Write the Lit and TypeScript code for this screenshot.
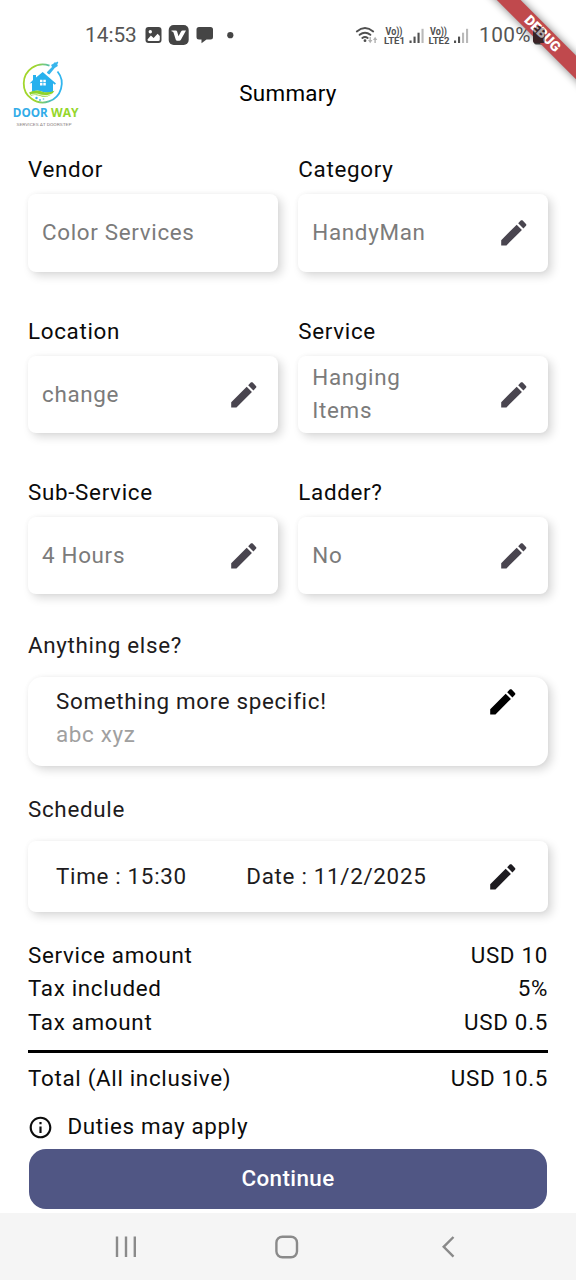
import { LitElement, html, css, svg } from "lit";
import { customElement, property } from "lit/decorators.js";

@customElement("edit-icon")
class EditIcon extends LitElement {
  static styles = css`
    :host { display: block; width: 33.6px; height: 33.6px; flex: none; }
    svg { display: block; width: 100%; height: 100%; fill: currentColor; }
  `;
  render() {
    return html`<svg viewBox="0 0 24 24"><path d="M3 17.25V21h3.75L17.81 9.94l-3.75-3.75L3 17.25zM20.71 7.04c.39-.39.39-1.02 0-1.41l-2.34-2.34c-.39-.39-1.02-.39-1.41 0l-1.83 1.83 3.75 3.75 1.83-1.83z"/></svg>`;
  }
}

@customElement("summary-field")
class SummaryField extends LitElement {
  @property() label = "";
  @property() value = "";
  @property({ type: Boolean }) editable = false;
  static styles = css`
    :host { display: flex; flex-direction: column; gap: 7.4px; }
    .label { color: #0a0a0a; line-height: 33.6px; }
    .card {
      box-sizing: border-box; height: 77.6px; padding: 0 17px 0 14px; border-radius: 8px; background: #fff;
      display: flex; align-items: center; justify-content: space-between;
      box-shadow: 4px 4px 10px rgba(0, 0, 0, 0.15), 0 0 5px rgba(0, 0, 0, 0.04);
    }
    .value { color: #7b7b7b; width: 126px; }
    .wide { width: auto; }
    edit-icon { color: #49454f; }
  `;
  render() {
    return html`
      <div class="label">${this.label}</div>
      <div class="card">
        <div class="value ${this.editable ? "" : "wide"}">${this.value}</div>
        ${this.editable ? html`<edit-icon></edit-icon>` : ""}
      </div>`;
  }
}

@customElement("status-bar")
class StatusBar extends LitElement {
  static styles = css`
    :host { display: flex; box-sizing: border-box; height: 58px; padding: 13px 30px 0 85px; align-items: center; justify-content: space-between; color: #555; font-size: 20.8px; letter-spacing: 0; }
    .side { display: flex; align-items: center; }
    .icons { display: block; margin-left: 7px; margin-top: -1px; }
    .full { letter-spacing: 0.4px; margin-left: 7px; }
    .battery { display: block; margin-left: 3px; }
    svg text { font-family: Roboto, sans-serif; font-weight: 700; letter-spacing: 0; }
  `;
  private sim(x: number, n: number, strong: number) {
    return svg`
      <text x=${x + 1.5} y="16" font-size="10" textLength="17" lengthAdjust="spacingAndGlyphs">Vo))</text>
      <text x=${x} y="24.6" font-size="9.6" textLength="21" lengthAdjust="spacingAndGlyphs">LTE${n}</text>
      ${[0, 1, 2, 3].map((i) => svg`<rect x=${x + 25.5 + i * 4} y=${21.5 - i * 3.9} width="2.1" height=${2.5 + i * 3.9} opacity=${i < strong ? 1 : 0.4}/>`)}`;
  }
  render() {
    return html`
      <div class="side">
        <span>14:53</span>
        <svg class="icons" width="92" height="24" viewBox="145 23 92 24" fill="#454545">
          <rect x="146.5" y="27" width="16" height="16" rx="3"/>
          <circle cx="151.3" cy="31.8" r="1.7" fill="#fff"/>
          <path d="M148.5 39.5l3.4-4 2.7 2.6 4-4.4 2.2 2.4v3.4q0 1.5-1.5 1.5h-9.3q-1.5 0-1.5-1.5z" fill="#fff"/>
          <rect x="169.7" y="25" width="20" height="20" rx="5"/>
          <path d="M172.500 30.500h4.200q1.200 0 1.500 1.300l1.300 4.500 2.400-4.600q.6-1.200 1.900-1.200h3.200l-5.100 9.200q-.6 1-1.700 1h-2q-1 0-1.400-1l-2.300-7.200q-.3-.9-2-1.200z" fill="#fff"/>
          <path d="M200 27h11.5a2.500 2.500 0 0 1 2.500 2.500v7.500a2.500 2.500 0 0 1-2.500 2.500h-4l-5 3.800v-3.800h-2.500a2.500 2.500 0 0 1-2.500-2.500v-7.500a2.500 2.500 0 0 1 2.500-2.500z"/>
          <circle cx="231.3" cy="35.2" r="3.1"/>
        </svg>
      </div>
      <div class="side">
        <svg width="118" height="34" viewBox="355 18 118 34" fill="#505050">
          <g fill="none" stroke="#505050" stroke-width="1.9" stroke-linecap="round">
            <path d="M357.8 30.4q8.200-6.800 16.400 0M360.600 33.800q5.400-4.300 10.800 0M363.300 37q2.700-2 5.400 0"/>
          </g>
          <circle cx="366" cy="39.7" r="1.4"/>
          <path d="M369 39h1.500v-3h1.400v3h1.500l-2.200 3.200zM374 39h1.400v3h1.400v-3h1.500l-2.200-3.200z" opacity=".45"/>
          <g transform="translate(0 18)">${this.sim(385, 1, 3)}${this.sim(429.5, 2, 2)}</g>
        </svg>
        <span class="full">100%</span>
        <svg class="battery" width="12" height="18" viewBox="0 0 12 18"><path d="M3.5 0h5v2h1.500a2 2 0 0 1 2 2v11.500a2 2 0 0 1-2 2h-8a2 2 0 0 1-2-2v-11.500a2 2 0 0 1 2-2h1.500z" fill="#444"/></svg>
      </div>`;
  }
}

@customElement("door-logo")
class DoorLogo extends LitElement {
  static styles = css`
    :host { display: block; width: 70px; height: 70px; }
    svg { display: block; }
    text { font-family: "Open Sans", sans-serif; letter-spacing: 0; }
    .name { font-size: 12px; font-weight: 700; }
    .tag { font-size: 4.2px; fill: #8b7f7f; font-family: Roboto, sans-serif; }
  `;
  render() {
    return html`<svg width="70" height="70" viewBox="10 59 70 70">
      <defs><linearGradient id="ring" x1="0" x2="1" y1="0" y2="0"><stop offset=".3" stop-color="#a2d62c"/><stop offset=".85" stop-color="#31b5ee"/></linearGradient></defs>
      <path d="M49.500 65.700A19 19 0 1 0 57.500 71.500" fill="none" stroke="url(#ring)" stroke-width="1.8"/>
      <path d="M29.500 83.500L33 80v-5h3v2.600L42.700 72 56 83.500l-1.200 1.300-1.800-1.500V92q-5 1.500-10 0-6-3-11 0v-9z" fill="#27b1ee"/>
      <path d="M40 79.800h2.500v2.400H40zM43.300 79.800h2.500v2.400h-2.500zM40 83h2.500v2.400H40zM43.300 83h2.500v2.400h-2.500z" fill="#fff"/>
      <path d="M46.800 72.200l5.200-5.200-.9-2 2.500-1.600 1.400-1.300.9.700 1.400-1.200 1 1-1 1.700.5 1.600-3.100 2-5.300 6.600q-1.800-.3-2.600-2.300z" fill="#38b5ec"/>
      <path d="M29 92.500q7-3.500 13.500-.8 5.500 1.500 12-1-4 7-12 6-7-3-11.500-1z" fill="#8ed32b"/>
      <path d="M31 94.500q6-1.500 11 .8 5 1.200 10-1.200" fill="none" stroke="#fff" stroke-width=".8"/>
      <circle cx="36.500" cy="98" r="1.200" fill="#38b5ec"/><circle cx="40" cy="100" r=".9" fill="#38b5ec"/><circle cx="43.500" cy="99" r=".9" fill="#8fd7f5"/>
      <text class="name" x="12.800" y="116.700" textLength="35" lengthAdjust="spacingAndGlyphs" fill="#32ace8">DOOR</text>
      <text class="name" x="51" y="116.700" textLength="27.500" lengthAdjust="spacingAndGlyphs" fill="#94d62b">WAY</text>
      <text class="tag" x="16.500" y="125.600" textLength="55" lengthAdjust="spacingAndGlyphs">SERVICES AT DOORSTEP</text>
    </svg>`;
  }
}

@customElement("app-root")
class AppRoot extends LitElement {
  static styles = css`
    :host {
      display: flex; flex-direction: column; position: relative; box-sizing: border-box; width: 576px; height: 1280px; overflow: hidden;
      background: #fff; color: #1d1b20; font: 400 22.4px/33.6px Roboto, sans-serif; letter-spacing: 0.68px;
    }
    .appbar { height: 71px; display: grid; grid-template-columns: 70px 1fr 70px; padding: 0 10px; align-items: center; color: #000; }
    .title { text-align: center; letter-spacing: 0.28px; }
    .content { padding: 24.3px 28px 0; display: flex; flex-direction: column; }
    .fields { display: grid; grid-template-columns: 1fr 1fr; gap: 42.7px 20.6px; }
    .else { margin-top: 34.5px; }
    .schedule { margin-top: 27px; }
    .card { box-sizing: border-box; margin-top: 14.7px; display: flex; justify-content: space-between; background: #fff; padding: 0 28px; box-shadow: 4px 4px 10px rgba(0, 0, 0, 0.15), 0 0 5px rgba(0, 0, 0, 0.04); }
    .note { height: 88.4px; border-radius: 14px; padding-top: 7.4px; }
    .note edit-icon { color: #000; }
    .muted { color: #a0a0a0; }
    .slot { height: 70.7px; border-radius: 8px; align-items: center; padding-top: 1.4px; }
    .times { display: flex; gap: 59.6px; }
    .totals { margin-top: 27px; color: #0c0c0c; }
    .line { display: flex; justify-content: space-between; }
    .rule { height: 3px; background: #000; margin: 10.6px 0 8.6px; }
    .duties { display: flex; align-items: center; gap: 14.4px; margin-top: 14.6px; color: #0c0c0c; }
    .info { display: block; fill: #0c0c0c; margin-top: 1px; }
    .button { height: 60.4px; margin: 5.5px 1px 0; border-radius: 17px; background: #505684; color: #fff; font-weight: 500; display: flex; align-items: center; justify-content: center; letter-spacing: 0.4px; }
    .nav { height: 67px; margin-top: auto; background: #f5f5f5; }
    .nav svg { display: block; fill: none; stroke: #8a8a8a; stroke-width: 2.4; }
    .debug { position: absolute; top: 0; right: 0; }
    .debug text { font: 900 14px Roboto, sans-serif; letter-spacing: 0; fill: #fff; }
  `;
  render() {
    return html`
      <status-bar></status-bar>
      <div class="appbar"><door-logo></door-logo><div class="title">Summary</div></div>
      <div class="content">
        <div class="fields">
          <summary-field label="Vendor" value="Color Services"></summary-field>
          <summary-field label="Category" value="HandyMan" editable></summary-field>
          <summary-field label="Location" value="change" editable></summary-field>
          <summary-field label="Service" value="Hanging Items" editable></summary-field>
          <summary-field label="Sub-Service" value="4 Hours" editable></summary-field>
          <summary-field label="Ladder?" value="No" editable></summary-field>
        </div>
        <div class="else">Anything else?</div>
        <div class="card note">
          <div><div>Something more specific!</div><div class="muted">abc xyz</div></div>
          <edit-icon></edit-icon>
        </div>
        <div class="schedule">Schedule</div>
        <div class="card slot">
          <div class="times"><span>Time : 15:30</span><span>Date : 11/2/2025</span></div>
          <edit-icon></edit-icon>
        </div>
        <div class="totals">
          <div class="line"><span>Service amount</span><span>USD 10</span></div>
          <div class="line"><span>Tax included</span><span>5%</span></div>
          <div class="line"><span>Tax amount</span><span>USD 0.5</span></div>
          <div class="rule"></div>
          <div class="line"><span>Total (All inclusive)</span><span>USD 10.5</span></div>
        </div>
        <div class="duties">
          <svg class="info" width="25" height="25" viewBox="0.5 0.5 23 23"><path d="M11 7h2v2h-2zm0 4h2v6h-2zm1-9C6.480 2 2 6.480 2 12s4.480 10 10 10 10-4.480 10-10S17.520 2 12 2zm0 18c-4.410 0-8-3.590-8-8s3.590-8 8-8 8 3.590 8 8-3.590 8-8 8z"/></svg>
          <span>Duties may apply</span>
        </div>
        <div class="button">Continue</div>
      </div>
      <div class="nav">
        <svg width="576" height="67" viewBox="0 1213 576 67">
          <path d="M117 1236.500v20.500M126 1236.500v20.500M134.800 1236.500v20.500"/>
          <rect x="276.400" y="1236.700" width="20.600" height="20.600" rx="6"/>
          <path d="M453.500 1237l-9.800 9.800 9.800 9.800"/>
        </svg>
      </div>
      <svg class="debug" width="100" height="100" viewBox="476 0 100 100">
        <defs><filter id="soft" x="-30%" y="-30%" width="160%" height="160%"><feGaussianBlur stdDeviation="4.5"/></filter></defs>
        <path d="M476.800-20H500.600L596 75.400V99.200z" fill="#000" opacity=".5" filter="url(#soft)"/>
        <path d="M496.800 0H520.600L576 55.400V79.200z" fill="#c0494d"/>
        <path d="M536 26h5v2h2a2 2 0 0 1 2 2v11a2 2 0 0 1-2 2h-8a2 2 0 0 1-2-2v-11a2 2 0 0 1 2-2h1z" fill="#3a2226"/>
        <text transform="translate(542.800 33.300) rotate(45)" text-anchor="middle" y="5">DEBUG</text>
        <path d="M536 26h5v2h2a2 2 0 0 1 2 2v11a2 2 0 0 1-2 2h-8a2 2 0 0 1-2-2v-11a2 2 0 0 1 2-2h1z" fill="#3a2226" opacity=".4"/>
      </svg>`;
  }
}
